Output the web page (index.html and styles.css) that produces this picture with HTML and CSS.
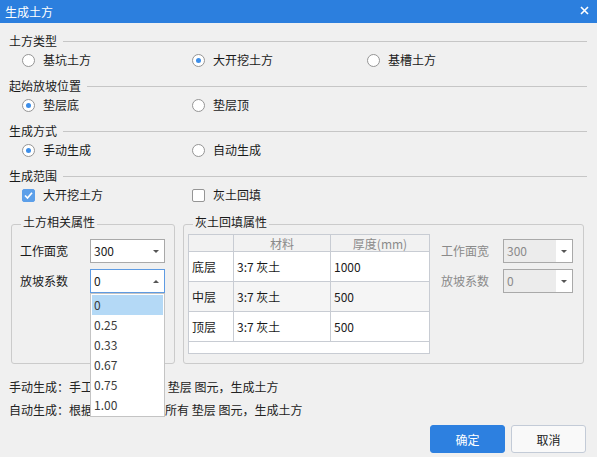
FILE: index.html
```html
<!DOCTYPE html>
<html lang="zh-CN">
  <head>
    <meta charset="UTF-8" />
    <meta name="viewport" content="width=device-width, initial-scale=1.0" />
    <title>生成土方</title>
    <link rel="stylesheet" href="styles.css">
  </head>
  <body>
    <div class="dialog">
      <div class="titlebar">
        <span class="title">生成土方</span>
        <svg class="close" width="9" height="9" viewBox="0 0 9 9">
          <path d="M1 1L8 8M8 1L1 8" stroke="#fff" stroke-width="1.6" />
        </svg>
      </div>

      <div class="dialog-body">
        <div class="section">
          <div class="section-head"><span>土方类型</span></div>
          <div class="options">
            <label class="option"><i class="radio"></i>基坑土方</label>
            <label class="option"><i class="radio checked"></i>大开挖土方</label>
            <label class="option"><i class="radio"></i>基槽土方</label>
          </div>
        </div>

        <div class="section">
          <div class="section-head"><span>起始放坡位置</span></div>
          <div class="options">
            <label class="option"><i class="radio checked"></i>垫层底</label>
            <label class="option"><i class="radio"></i>垫层顶</label>
          </div>
        </div>

        <div class="section">
          <div class="section-head"><span>生成方式</span></div>
          <div class="options">
            <label class="option"><i class="radio checked"></i>手动生成</label>
            <label class="option"><i class="radio"></i>自动生成</label>
          </div>
        </div>

        <div class="section">
          <div class="section-head"><span>生成范围</span></div>
          <div class="options">
            <label class="option">
              <i class="check checked">
                <svg width="11" height="11" viewBox="0 0 11 11">
                  <path d="M2 5.5L4.5 8L9 2.8" fill="none" stroke="#fff" stroke-width="1.7" />
                </svg>
              </i>大开挖土方
            </label>
            <label class="option"><i class="check"></i>灰土回填</label>
          </div>
        </div>

        <div class="groups">
          <fieldset class="group group-earth">
            <legend>土方相关属性</legend>
            <div class="field">
              <span class="field-label">工作面宽</span>
              <div class="combo">
                <span class="combo-value">300</span>
                <span class="combo-arrow"></span>
              </div>
            </div>
            <div class="field">
              <span class="field-label">放坡系数</span>
              <div class="combo open">
                <span class="combo-value">0</span>
                <span class="combo-arrow"></span>
                <ul class="dropdown">
                  <li class="selected">0</li>
                  <li>0.25</li>
                  <li>0.33</li>
                  <li>0.67</li>
                  <li>0.75</li>
                  <li>1.00</li>
                </ul>
              </div>
            </div>
          </fieldset>

          <fieldset class="group group-fill">
            <legend>灰土回填属性</legend>
            <table class="fill-table">
              <colgroup>
                <col class="col-layer" />
                <col class="col-material" />
                <col class="col-depth" />
              </colgroup>
              <tr>
                <th></th>
                <th>材料</th>
                <th>厚度(mm)</th>
              </tr>
              <tr>
                <td>底层</td>
                <td>3:7 灰土</td>
                <td>1000</td>
              </tr>
              <tr class="alt">
                <td>中层</td>
                <td>3:7 灰土</td>
                <td>500</td>
              </tr>
              <tr>
                <td>顶层</td>
                <td>3:7 灰土</td>
                <td>500</td>
              </tr>
              <tr class="blank">
                <td colspan="3"></td>
              </tr>
            </table>
            <div class="fill-fields">
              <div class="field">
                <span class="field-label">工作面宽</span>
                <div class="combo disabled">
                  <span class="combo-value">300</span>
                  <span class="combo-arrow"></span>
                </div>
              </div>
              <div class="field">
                <span class="field-label">放坡系数</span>
                <div class="combo disabled">
                  <span class="combo-value">0</span>
                  <span class="combo-arrow"></span>
                </div>
              </div>
            </div>
          </fieldset>
        </div>

        <div class="notes">
          <p>手动生成：手工在绘图区选择 垫层 图元，生成土方</p>
          <p>自动生成：根据当前楼层中的所有 垫层 图元，生成土方</p>
        </div>

        <div class="actions">
          <button class="btn btn-primary">确定</button>
          <button class="btn">取消</button>
        </div>
      </div>
    </div>
  </body>
</html>
```

FILE: styles.css
```css
* {
  box-sizing: border-box;
}
body {
  margin: 0;
  background: #f0f0f0;
  font-family: "Noto Sans CJK SC", "Microsoft YaHei", sans-serif;
  font-size: 12px;
  color: #1a1a1a;
}
.dialog {
  width: 597px;
  height: 457px;
  background: #f0f0f0;
}
.titlebar {
  height: 23px;
  background: #2c7fde;
  color: #fff;
  display: flex;
  align-items: center;
  justify-content: space-between;
  padding: 0 8px 0 5px;
}
.title {
  line-height: 16px;
}
.close {
  display: block;
  margin-top: -3px;
}
.dialog-body {
  padding: 10px 10px 0 9px;
}

/* section heading with a rule running to the right */
.section {
  margin-bottom: 7px;
}
.section-head {
  display: flex;
  align-items: center;
  gap: 6px;
  height: 16px;
  line-height: 16px;
}
.section-head::after {
  content: "";
  flex: 1;
  border-top: 1px solid #c6c6c6;
}
.options {
  display: grid;
  grid-template-columns: 170px 175px 1fr;
  align-items: center;
  height: 22px;
  padding-left: 13px;
}
.option {
  display: flex;
  align-items: center;
  gap: 8px;
  line-height: 16px;
}
.radio {
  width: 13px;
  height: 13px;
  border: 1px solid #959595;
  border-radius: 50%;
  background: #fff;
  display: flex;
  align-items: center;
  justify-content: center;
}
.radio.checked::after {
  content: "";
  width: 5px;
  height: 5px;
  border-radius: 50%;
  background: #3c8ee9;
}
.check {
  width: 13px;
  height: 13px;
  border: 1px solid #959595;
  border-radius: 2px;
  background: #fff;
  display: flex;
  align-items: center;
  justify-content: center;
}
.check.checked {
  background: #5c9fe9;
  border-color: #5c9fe9;
}
.check svg {
  display: block;
}

/* group boxes */
.groups {
  display: flex;
  gap: 8px;
  margin: 8px 0 0 2px;
}
.group {
  margin: 0;
  min-width: 0;
  border: 1px solid #cbcbcb;
  border-radius: 3px;
}
.group legend {
  padding: 0 2px 4px;
  line-height: 16px;
}
.group-earth {
  width: 164px;
  padding: 5px 9px 0 8px;
}
.group-earth legend {
  margin-left: 1px;
}
.group-fill {
  width: 401px;
  display: flex;
  align-items: flex-start;
  gap: 11px;
  padding: 0 10px 9px 4px;
}
.group-fill legend {
  margin-left: 5px;
}
.fill-fields {
  margin-top: 5px;
}
.fill-fields .field-label {
  width: 62px;
  color: #8a8a8a;
}
.fill-fields .combo {
  width: 70px;
}

.field {
  display: flex;
  align-items: center;
  margin-bottom: 6px;
}
.field-label {
  width: 70px;
  line-height: 24px;
}

/* combo box */
.combo {
  position: relative;
  display: flex;
  width: 75px;
  height: 24px;
  border: 1px solid #a9a9a9;
  background: #fff;
}
.combo-value {
  flex: 1;
  padding-left: 3px;
  line-height: 22px;
}
.combo-arrow {
  width: 16px;
  display: flex;
  align-items: center;
  justify-content: center;
  background: #fff;
}
.combo-arrow::after {
  content: "";
  border-left: 3px solid transparent;
  border-right: 3px solid transparent;
  border-top: 3px solid #555;
}
.combo.open {
  border-color: #5e9be2;
}
.combo.open .combo-arrow::after {
  border-top: 0;
  border-bottom: 3px solid #555;
}
.combo.disabled {
  background: #ececec;
}
.combo.disabled .combo-value {
  color: #8a8a8a;
}
.dropdown {
  position: absolute;
  top: 23px;
  left: -1px;
  width: 75px;
  margin: 0;
  padding: 1px;
  list-style: none;
  background: #fff;
  border: 1px solid #c4c4c4;
  z-index: 2;
}
.dropdown li {
  height: 20px;
  line-height: 20px;
  padding-left: 2px;
  color: #3a3a3a;
}
.dropdown li.selected {
  background: #b4d9f6;
}

/* fill layers table */
.fill-table {
  border-collapse: collapse;
  table-layout: fixed;
  width: 241px;
  background: #fff;
}
.col-layer {
  width: 45px;
}
.col-material {
  width: 97px;
}
.col-depth {
  width: 99px;
}
.fill-table th,
.fill-table td {
  border: 1px solid #c8ccd3;
  padding: 0 3px;
  text-align: left;
  font-weight: normal;
}
.fill-table th {
  height: 17px;
  line-height: 15px;
  text-align: center;
  color: #8a8a8a;
  background: #f2f2f2;
}
.fill-table td {
  height: 30px;
  line-height: 20px;
}
.fill-table tr.alt td {
  background: #f5f5f5;
}
.fill-table tr.blank td {
  height: 12px;
}

.notes {
  margin-top: 11px;
  line-height: 23px;
  color: #222;
}
.notes p {
  margin: 0;
}
.actions {
  display: flex;
  justify-content: flex-end;
  gap: 6px;
  margin-top: 4px;
  padding-right: 1px;
}
.btn {
  width: 75px;
  height: 28px;
  padding: 0;
  border: 1px solid #c3cbd7;
  border-radius: 3px;
  background: #f9f9f9;
  color: #222;
  font-family: inherit;
  font-size: 12px;
}
.btn-primary {
  background: #2d80e0;
  border-color: #2d80e0;
  color: #fff;
}
```
